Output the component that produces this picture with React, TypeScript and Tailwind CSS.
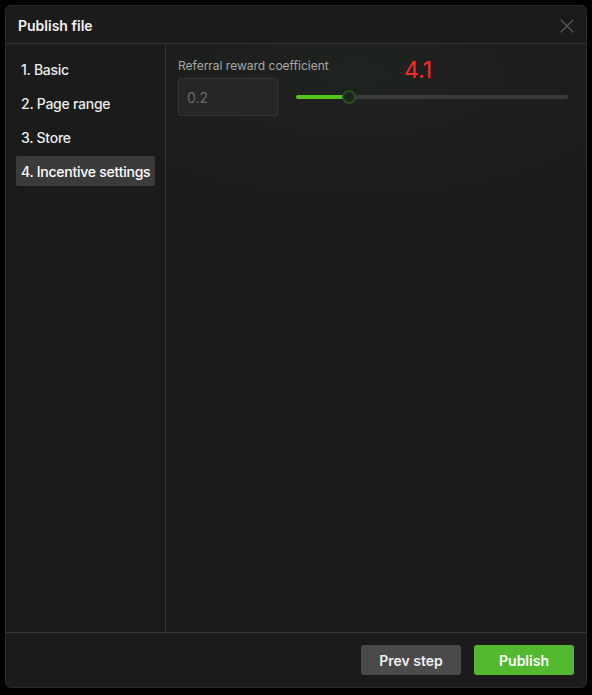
import { X } from "lucide-react";

const steps = ["1. Basic", "2. Page range", "3. Store", "4. Incentive settings"];

export default function App() {
  const active = 3;
  const value = 0.2;
  const pct = 19.5;

  return (
    <div className="h-[695px] w-[592px] bg-black p-[5px] font-['Inter',sans-serif]">
      <div className="flex h-[683px] w-[582px] flex-col overflow-hidden rounded-[6px] border border-[#2a2a2a] bg-[#1b1b1b]">
        <div className="flex h-[38px] shrink-0 items-center justify-between border-b border-[#363636] pl-3 pr-[7px] pt-[2px]">
          <h2 className="text-[14px] font-semibold text-[#f2f2f2]">Publish file</h2>
          <button className="text-[#585858]">
            <X size={24} strokeWidth={1.3} />
          </button>
        </div>

        <div className="flex min-h-0 flex-1">
          <nav className="flex w-[160px] shrink-0 flex-col gap-1 border-r border-[#333] px-[10px] pt-[10px]">
            {steps.map((s, i) => (
              <div
                key={s}
                className={
                  "flex h-[30px] items-center whitespace-nowrap rounded-[2px] px-[5px] text-[14px] font-medium tracking-[-0.25px] " +
                  (i === active ? "bg-[#3b3b3b] text-white" : "text-[#ececec]")
                }
              >
                {s}
              </div>
            ))}
          </nav>

          <section className="flex-1 bg-[radial-gradient(ellipse_320px_140px_at_45%_30px,#1f231f,#1b1b1b)] pl-3 pr-[18px] pt-[14px]">
            <div className="relative">
              <label className="block text-[12px] leading-[15px] text-[#a8a8a8]">
                Referral reward coefficient
              </label>
              <span className="absolute left-[226px] top-[-2px] text-[23px] leading-[28px] text-[#ff2a2a]">
                4.1
              </span>
              <div className="mt-[5px] flex items-center gap-[18px]">
                <input
                  readOnly
                  value={value}
                  className="h-[38px] w-[100px] rounded-[2px] border border-[#353535] bg-[#262626] px-2 text-[14px] text-[#6a6a6a] outline-none"
                />
                <div className="relative h-[4px] flex-1 rounded-full bg-[#3a3a3a]">
                  <div className="h-full rounded-full bg-[#52c41a]" style={{ width: `${pct}%` }} />
                  <div
                    className="absolute top-1/2 h-[14px] w-[14px] -translate-x-1/2 -translate-y-1/2 rounded-full border-2 border-[#2a4d22] bg-[#1c2619]"
                    style={{ left: `${pct}%` }}
                  />
                </div>
              </div>
            </div>
          </section>
        </div>

        <div className="flex h-[55px] shrink-0 items-center justify-end gap-[13px] border-t border-[#363636] pr-3">
          <button className="h-[30px] w-[100px] rounded-[3px] bg-[#4a4a4a] text-[14px] font-semibold text-[#f0f0f0]">
            Prev step
          </button>
          <button className="h-[30px] w-[100px] rounded-[3px] bg-[#52b931] text-[14px] font-semibold text-white">
            Publish
          </button>
        </div>
      </div>
    </div>
  );
}
